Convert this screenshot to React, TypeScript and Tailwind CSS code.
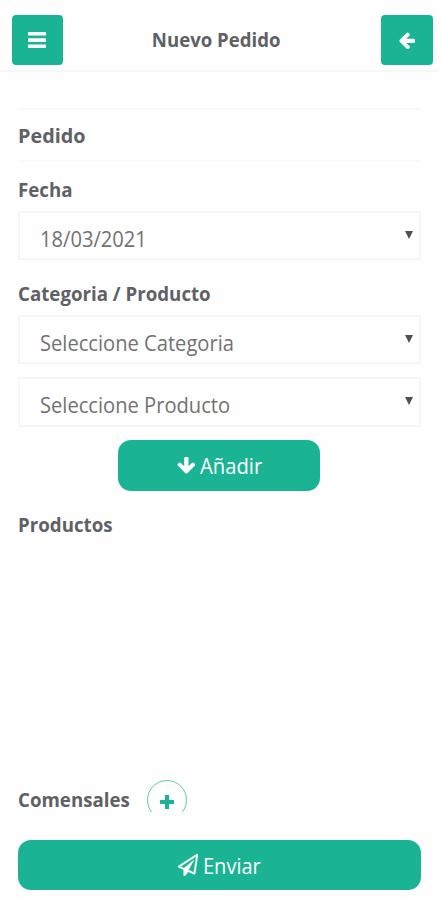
import type { ReactNode } from "react";

type IconProps = { className?: string };

function BarsIcon({ className }: IconProps) {
  return (
    <svg viewBox="0 0 18 16" fill="currentColor" className={className}>
      <rect x="0" y="0" width="18" height="3.6" rx="0.4" />
      <rect x="0" y="6.3" width="18" height="3.6" rx="0.4" />
      <rect x="0" y="12.4" width="18" height="3.6" rx="0.4" />
    </svg>
  );
}

function ArrowIcon({ className }: IconProps) {
  return (
    <svg viewBox="64 128 1600 1600" fill="currentColor" className={className}>
      <path d="M1664 896v128q0 53-32.5 90.5t-84.5 37.5h-704l293 294q38 36 38 90t-38 90l-75 76q-37 37-90 37-52 0-91-37l-651-652q-37-37-37-90 0-52 37-91l651-650q38-38 91-38 52 0 90 38l75 74q38 38 38 91t-38 91l-293 293h704q52 0 84.5 37.5t32.5 90.5z" />
    </svg>
  );
}

function PlaneIcon({ className }: IconProps) {
  return (
    <svg viewBox="0 0 1792 1792" preserveAspectRatio="none" fill="currentColor" stroke="currentColor" strokeWidth="40" className={className}>
      <path d="M1764 11q33 24 27 64l-256 1536q-5 29-32 45-14 8-31 8-11 0-24-5l-527-215-298 327q-18 21-47 21-14 0-23-4-19-7-30-23.5t-11-36.5v-452l-472-193q-37-14-40-55-3-39 32-59l1664-960q35-21 68 2zm-342 1499l221-1323-1434 827 336 137 863-639-478 797z" />
    </svg>
  );
}

function Label({ children, className }: { children: ReactNode; className: string }) {
  return (
    <h2 className={`origin-left whitespace-nowrap text-[20px] leading-[28px] font-bold ${className}`}>
      {children}
    </h2>
  );
}

function SelectBox({ value, className }: { value: string; className: string }) {
  return (
    <button type="button" className={`flex w-full items-center justify-between border-2 border-[#f7f7f7] pr-[6px] pl-5 text-left ${className}`}>
      <span className="origin-left scale-x-[0.915] pt-[4px] text-[22px] leading-[30px] whitespace-nowrap text-[#727272]">
        {value}
      </span>
      <svg viewBox="0 0 8 8" className="mb-[2px] h-2 w-2 fill-[#505050]">
        <path d="M0 0h8L4 8z" />
      </svg>
    </button>
  );
}

export default function App() {
  return (
    <div className="flex h-[900px] w-[439px] flex-col overflow-hidden bg-[#fefefe] font-['Open_Sans','Noto_Sans',sans-serif] text-[#606164]">
      <header className="flex h-[72px] shrink-0 items-start justify-between border-b-2 border-[#f7f7f7] pt-[15px] pr-[6px] pl-3">
        <button type="button" className="flex h-[50px] w-[51px] items-center justify-center rounded-[4px] bg-[#1ab394] pr-px text-white">
          <BarsIcon className="h-4 w-[18px]" />
        </button>
        <h1 className="mt-[11px] mr-[12px] scale-x-[0.93] text-[20px] leading-[28px] font-bold whitespace-nowrap">Nuevo Pedido</h1>
        <button type="button" className="flex h-[50px] w-[52px] items-center justify-center rounded-[4px] bg-[#1ab394] pt-px text-white">
          <ArrowIcon className="h-[19px] w-[17px]" />
        </button>
      </header>

      <main className="flex flex-1 flex-col pr-[18px] pl-[18px]">
        <div className="mt-9 flex h-[54px] items-center border-y-2 border-[#f9f9f9] pt-px">
          <Label className="scale-x-[0.99]">Pedido</Label>
        </div>

        <Label className="mt-[14px] scale-x-[0.935]">Fecha</Label>
        <SelectBox value="18/03/2021" className="mt-[7px] h-[49px]" />

        <Label className="mt-5 scale-x-[0.935]">Categoria / Producto</Label>
        <SelectBox value="Seleccione Categoria" className="mt-[7px] h-[49px]" />
        <SelectBox value="Seleccione Producto" className="mt-[13px] h-[50px]" />

        <button type="button" className="mt-[13px] mr-px flex h-[51px] w-[202px] items-center justify-center gap-[5px] self-center rounded-[13px] bg-[#1ab394] pb-[2px] pl-[6px] text-white">
          <ArrowIcon className="mt-[3px] h-[18px] w-[18px] -rotate-90" />
          <span className="origin-left scale-x-[0.92] text-[22px] leading-[30px]">Añadir</span>
        </button>

        <Label className="mt-5 scale-x-[0.935]">Productos</Label>

        {/* guests row, cut off above the footer button */}
        <div className="mt-auto flex h-8 shrink-0 items-start overflow-hidden">
          <Label className="mt-[6px] w-[129px] scale-x-[0.935]">Comensales</Label>
          <button type="button" className="flex h-10 w-10 shrink-0 items-center justify-center rounded-full border border-[#1ab394]/70 pt-[4px] text-[#1ab394]">
            <svg viewBox="0 0 14 14" fill="currentColor" className="h-[14px] w-[14px]">
              <path d="M5 0h4v5h5v4H9v5H5V9H0V5h5z" />
            </svg>
          </button>
        </div>

        <button type="button" className="mt-7 mb-[10px] flex h-[50px] shrink-0 items-center justify-center gap-[5px] rounded-[13px] bg-[#1ab394] pl-[6px] text-white">
          <PlaneIcon className="h-[22px] w-[20px]" />
          <span className="origin-left scale-x-[0.91] text-[22px] leading-[30px]">Enviar</span>
        </button>
      </main>
    </div>
  );
}
